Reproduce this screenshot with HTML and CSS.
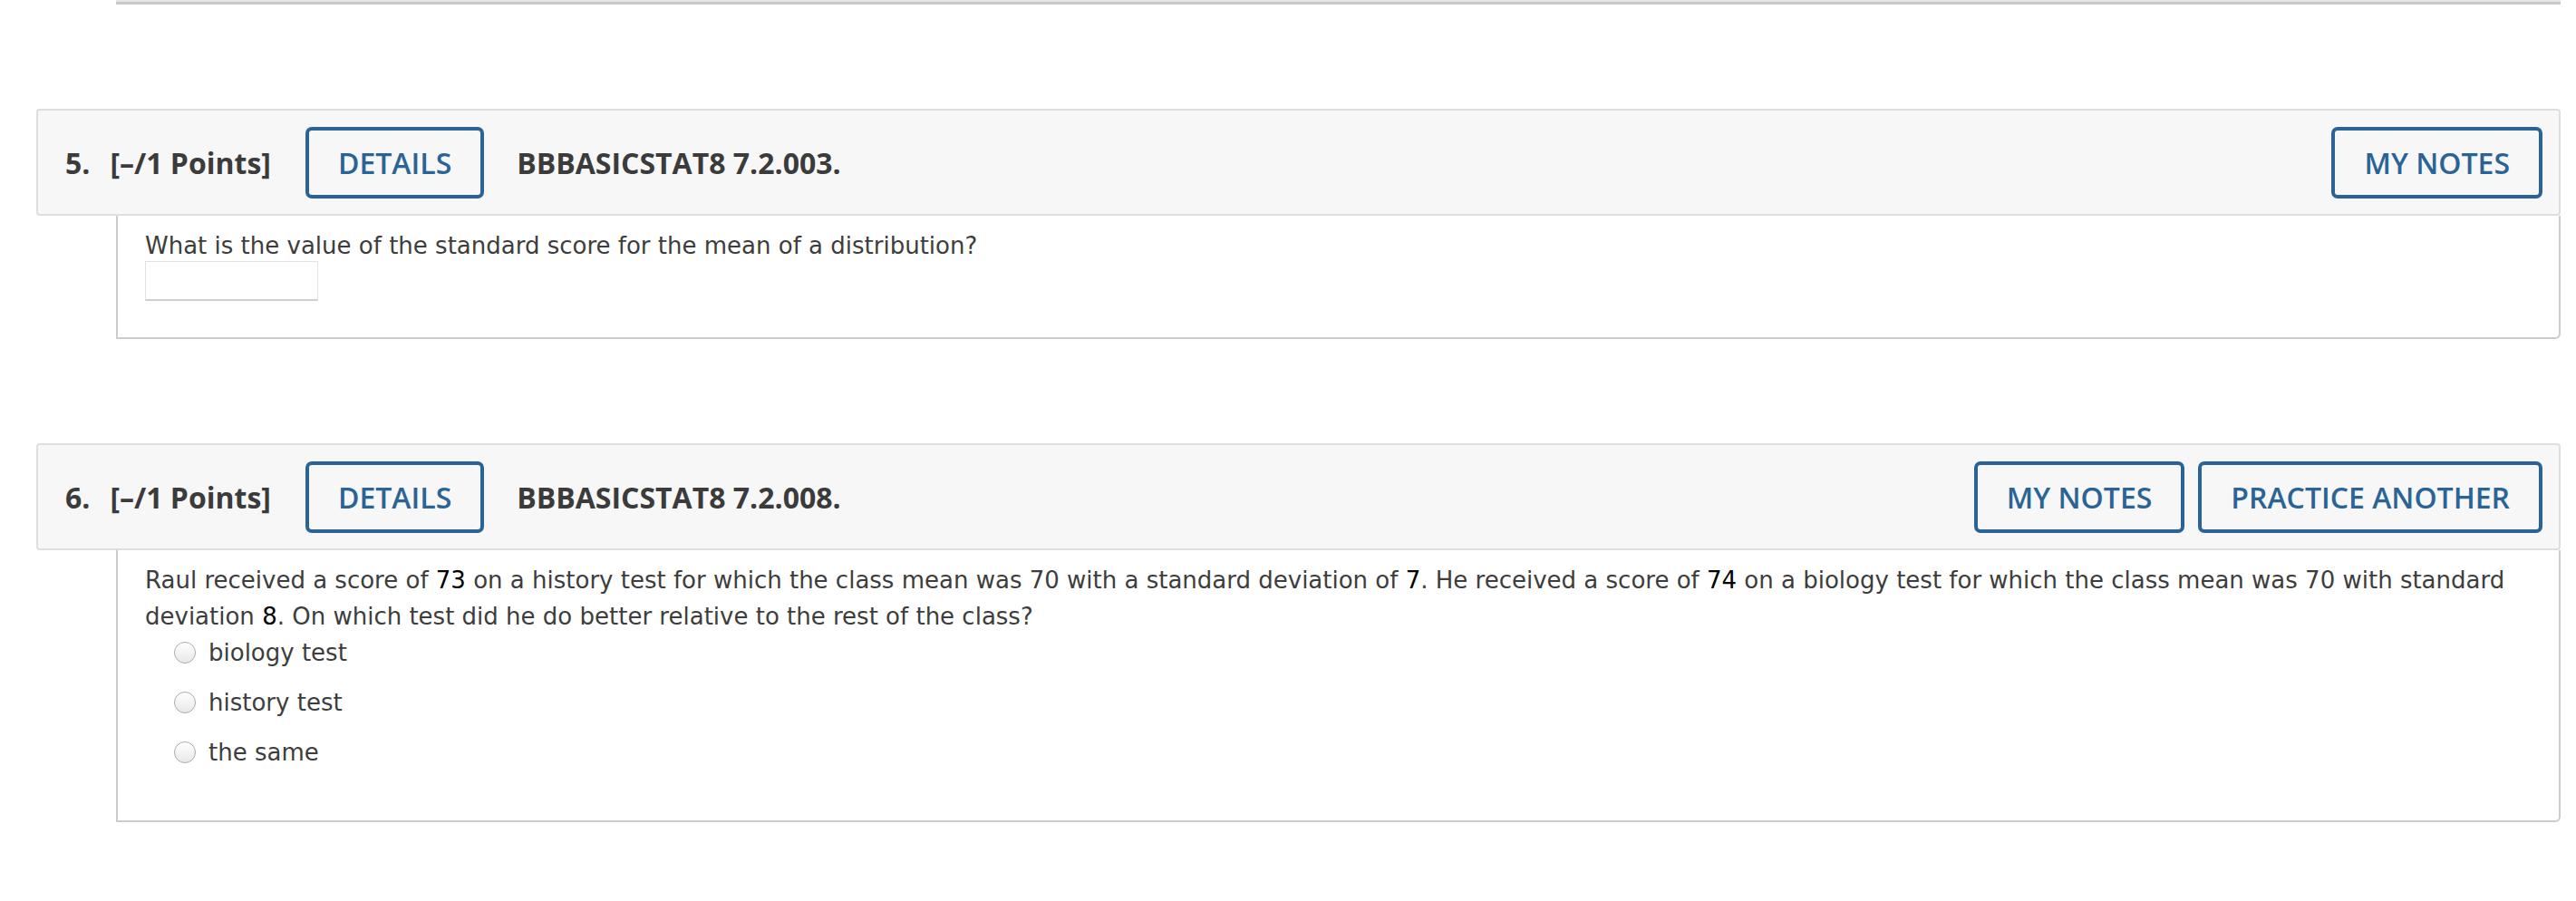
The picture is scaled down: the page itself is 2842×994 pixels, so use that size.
FILE: index.html
```html
<!DOCTYPE html>
<html>
<head>
    <title>Assignment</title>
    <meta name="viewport" content="width=device-width, initial-scale=1">
    <link rel="stylesheet" href="styles.css">
</head>
<body>
    <div class="page">
        <div class="prev-question"></div>

        <div class="question q5">
            <div class="question-header">
                <span class="num">5.</span>
                <span class="points">[&ndash;/1 Points]</span>
                <button class="btn details">DETAILS</button>
                <span class="problem-id">BBBASICSTAT8 7.2.003.</span>
                <div class="header-actions">
                    <button class="btn">MY NOTES</button>
                </div>
            </div>
            <div class="question-body">
                <div class="question-text">What is the value of the standard score for the mean of a distribution?</div>
                <input type="text" class="answer-input">
            </div>
        </div>

        <div class="question q6">
            <div class="question-header">
                <span class="num">6.</span>
                <span class="points">[&ndash;/1 Points]</span>
                <button class="btn details">DETAILS</button>
                <span class="problem-id">BBBASICSTAT8 7.2.008.</span>
                <div class="header-actions">
                    <button class="btn">MY NOTES</button>
                    <button class="btn">PRACTICE ANOTHER</button>
                </div>
            </div>
            <div class="question-body">
                <div class="question-text">Raul received a score of <span class="val">73</span> on a history test for which the class mean was 70 with a standard deviation of <span class="val">7</span>. He received a score of <span class="val">74</span> on a biology test for which the class mean was 70 with standard deviation <span class="val">8</span>. On which test did he do better relative to the rest of the class?</div>
                <ul class="choices">
                    <li><span class="radio"></span>biology test</li>
                    <li><span class="radio"></span>history test</li>
                    <li><span class="radio"></span>the same</li>
                </ul>
            </div>
        </div>
    </div>
</body>
</html>
```

FILE: styles.css
```css
body {
    margin: 0;
    background: #fff;
    font-family: "DejaVu Sans", Verdana, sans-serif;
    color: #3d3d3d;
}
.page {
    padding: 0 17px 0 40px;
}
.prev-question {
    margin-left: 88px;
    height: 2px;
    background: #e8e2ea;
    border-bottom: 3px solid #c8c8c8;
}
.q5 {
    margin-top: 115px;
}
.q6 {
    margin-top: 115px;
}
.question-header {
    display: flex;
    align-items: center;
    height: 114px;
    padding: 0 18px 0 30px;
    background: #f7f7f7;
    border: 2px solid #dedede;
    border-radius: 4px;
    font-family: "Open Sans", sans-serif;
    font-size: 32px;
    font-weight: 700;
    color: #3b3b3b;
}
.num {
    margin-right: 22px;
}
.points {
    margin-right: 38px;
}
.problem-id {
    margin-left: 36px;
}
.header-actions {
    margin-left: auto;
    display: flex;
    gap: 15px;
}
.btn {
    height: 79px;
    padding: 0 32px;
    background: #f7f7f7;
    border: 4px solid #2a6496;
    border-radius: 7px;
    font-family: "Open Sans", sans-serif;
    font-size: 32px;
    font-weight: 600;
    color: #2a6496;
    cursor: pointer;
}
.question-body {
    margin-left: 88px;
    padding: 13px 28px 40px 30px;
    border: 2px solid #cccccc;
    border-top: none;
    border-radius: 0 0 6px 0;
    font-size: 26px;
    line-height: 40px;
}
.q6 .question-body {
    padding-bottom: 55px;
}
.val {
    color: #000;
}
.answer-input {
    display: block;
    margin-top: -3px;
    width: 191px;
    height: 44px;
    box-sizing: border-box;
    border: 1px solid #e2e2e2;
    border-bottom: 2px solid #cfcfcf;
    background: #fff;
}
.choices {
    list-style: none;
    margin: 0;
    padding: 0 0 0 32px;
}
.choices li {
    display: flex;
    align-items: center;
    margin-top: 15px;
}
.choices li:first-child {
    margin-top: 0;
}
.radio {
    width: 22px;
    height: 22px;
    margin-right: 14px;
    border: 1px solid #ababab;
    border-radius: 50%;
    background: linear-gradient(#ffffff, #e8e8e8);
}
```
